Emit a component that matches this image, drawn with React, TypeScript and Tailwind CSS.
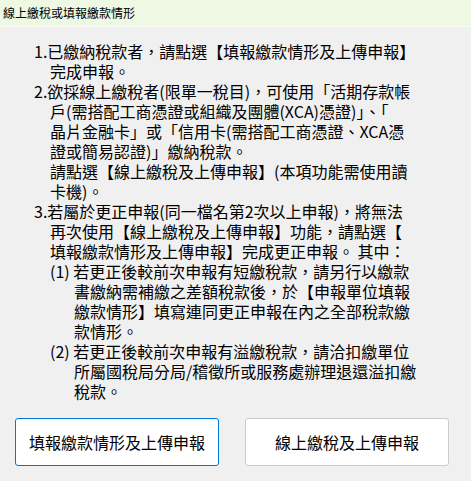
import React from 'react';

const font = "font-['Microsoft_JhengHei','Noto_Sans_CJK_TC',sans-serif]";

const App = () => {
  return (
    <div className={`w-[471px] h-[481px] bg-[#f0f0f0] text-black ${font}`}>
      {/* Title bar */}
      <div className="h-[27px] bg-[#eef8e2] border-b border-[#f7f9f4] px-[3px] text-[12px] leading-[25px]">
        線上繳稅或填報繳款情形
      </div>

      {/* Notes */}
      <div className="pl-[34px] pt-[14px] text-[16px] leading-[20px] whitespace-nowrap">
        <p className="pl-[16px] -indent-[16px]">
          1.已繳納稅款者，請點選【填報繳款情形及上傳申報】<br />
          完成申報。
        </p>
        <p className="pl-[16px] -indent-[16px]">
          2.欲採線上繳稅者(限單一稅目)，可使用「活期存款帳<br />
          戶(需搭配工商憑證或組織及團體(XCA)憑證)」、「<br />
          晶片金融卡」或「信用卡(需搭配工商憑證、XCA憑<br />
          證或簡易認證)」繳納稅款。<br />
          請點選【線上繳稅及上傳申報】(本項功能需使用讀<br />
          卡機)。
        </p>
        <div className="pl-[16px]">
          <p className="-indent-[16px]">
            3.若屬於更正申報(同一檔名第2次以上申報)，將無法<br />
            再次使用【線上繳稅及上傳申報】功能，請點選【<br />
            填報繳款情形及上傳申報】完成更正申報。 其中：
          </p>
          <p className="pl-[24px] -indent-[24px]">
            (1) 若更正後較前次申報有短繳稅款，請另行以繳款<br />
            書繳納需補繳之差額稅款後，於【申報單位填報<br />
            繳款情形】填寫連同更正申報在內之全部稅款繳<br />
            款情形。
          </p>
          <p className="pl-[24px] -indent-[24px]">
            (2) 若更正後較前次申報有溢繳稅款，請洽扣繳單位<br />
            所屬國稅局分局/稽徵所或服務處辦理退還溢扣繳<br />
            稅款。
          </p>
        </div>
      </div>

      {/* Actions */}
      <div className="flex gap-[26px] pl-[15px] pt-[17px]">
        <button className="w-[204px] h-[48px] bg-white border border-[#0078d7] rounded-[3px] text-[16px]">
          填報繳款情形及上傳申報
        </button>
        <button className="w-[204px] h-[48px] bg-white border border-[#cccccc] rounded-[3px] text-[16px]">
          線上繳稅及上傳申報
        </button>
      </div>
    </div>
  );
};

export default App;
